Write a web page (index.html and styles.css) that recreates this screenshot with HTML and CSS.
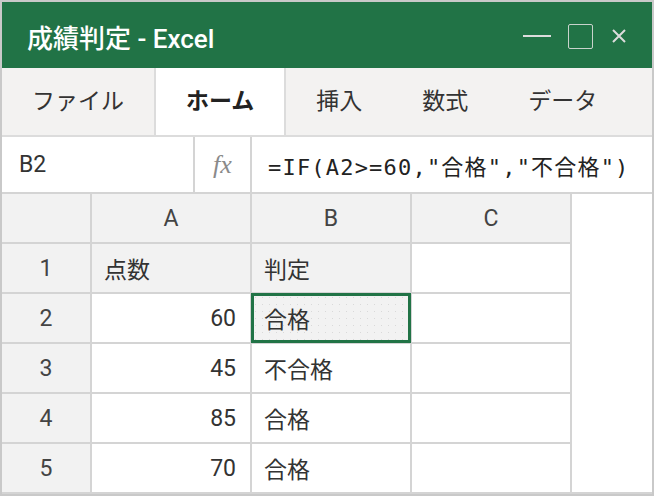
FILE: index.html
```html
<!DOCTYPE html>
<html lang="ja">
<head>
    <meta charset="UTF-8">
    <meta name="viewport" content="width=device-width, initial-scale=1.0">
    <title>成績判定 - Excel</title>
    <link rel="stylesheet" href="styles.css">
</head>
<body>
    <div class="window">
        <div class="titlebar">
            <div class="app-title">成績判定 - Excel</div>
            <div class="controls">
                <span class="ctl-min"></span>
                <span class="ctl-max"></span>
                <svg class="ctl-close" width="14" height="14" viewBox="0 0 14 14">
                    <path d="M1 1 L13 13 M13 1 L1 13" stroke="#dcdcdc" stroke-width="2" fill="none"/>
                </svg>
            </div>
        </div>

        <div class="tabs">
            <div class="tab">ファイル</div>
            <div class="tab active">ホーム</div>
            <div class="tab">挿入</div>
            <div class="tab">数式</div>
            <div class="tab">データ</div>
        </div>

        <div class="formula-bar">
            <div class="name-box">B2</div>
            <div class="fx-box">fx</div>
            <div class="formula">=IF(A2&gt;=60,"合格","不合格")</div>
        </div>

        <div class="sheet-area">
            <div class="sheet">
                <div class="hdr corner"></div>
                <div class="hdr col">A</div>
                <div class="hdr col">B</div>
                <div class="hdr col">C</div>

                <div class="hdr row">1</div>
                <div class="cell label">点数</div>
                <div class="cell label">判定</div>
                <div class="cell"></div>

                <div class="hdr row">2</div>
                <div class="cell num">60</div>
                <div class="cell selected">合格</div>
                <div class="cell"></div>

                <div class="hdr row">3</div>
                <div class="cell num">45</div>
                <div class="cell">不合格</div>
                <div class="cell"></div>

                <div class="hdr row">4</div>
                <div class="cell num">85</div>
                <div class="cell">合格</div>
                <div class="cell"></div>

                <div class="hdr row">5</div>
                <div class="cell num">70</div>
                <div class="cell">合格</div>
                <div class="cell"></div>
            </div>
        </div>
    </div>
</body>
</html>
```

FILE: styles.css
```css
body {
    margin: 0;
    padding: 0;
    font-family: Roboto, "Noto Sans CJK JP", sans-serif;
    background: white;
    color: #333;
}

.window {
    width: 654px;
    height: 496px;
    box-sizing: border-box;
    border: 2px solid #c9c9c9;
    background: white;
    overflow: hidden;
}

.titlebar {
    height: 66px;
    background: #217346;
    display: flex;
    align-items: center;
    justify-content: space-between;
    padding: 2px 26px 0 25px;
    box-sizing: border-box;
}

.app-title {
    color: white;
    font-size: 26px;
    font-weight: 500;
}

.controls {
    display: flex;
    align-items: center;
}

.ctl-min {
    width: 28px;
    height: 2px;
    background: #dcdcdc;
    margin-right: 17px;
}

.ctl-max {
    width: 23px;
    height: 23px;
    border: 1.5px solid #c9d3cc;
    border-radius: 2px;
    margin-right: 19px;
}

.tabs {
    height: 67px;
    background: #f3f2f1;
    border-bottom: 2px solid #dcdcdc;
    display: flex;
}

.tab {
    padding: 0 30px;
    font-size: 23px;
    line-height: 67px;
    color: #333;
}

.tab.active {
    background: white;
    border-left: 2px solid #dcdcdc;
    border-right: 2px solid #dcdcdc;
    font-weight: 700;
    color: #222;
}

.formula-bar {
    height: 55px;
    border-bottom: 2px solid #d4d4d4;
    display: flex;
    align-items: stretch;
}

.name-box {
    width: 193px;
    border-right: 2px solid #d4d4d4;
    padding-left: 17px;
    box-sizing: border-box;
    font-size: 23px;
    display: flex;
    align-items: center;
}

.fx-box {
    width: 57px;
    border-right: 2px solid #d4d4d4;
    box-sizing: border-box;
    font-family: "Liberation Serif", serif;
    font-style: italic;
    font-size: 26px;
    color: #8a8a8a;
    display: flex;
    align-items: center;
    justify-content: center;
}

.formula {
    padding-left: 16px;
    font-family: "DejaVu Sans Mono", "Noto Sans CJK JP", monospace;
    font-size: 22px;
    letter-spacing: 1.2px;
    color: #222;
    display: flex;
    align-items: center;
}

.sheet-area {
    border-bottom: 2px solid #d4d4d4;
}

.sheet {
    display: grid;
    grid-template-columns: 88px 158px 158px 158px;
    grid-auto-rows: 48px;
    gap: 2px;
    width: max-content;
    background: #d4d4d4;
    padding-right: 2px;
}

.hdr {
    background: #f2f2f2;
    font-size: 23px;
    color: #444;
    display: flex;
    align-items: center;
    justify-content: center;
}

.cell {
    background: white;
    font-size: 23px;
    color: #333;
    display: flex;
    align-items: center;
    padding: 0 12px;
}

.cell.label {
    background: #f2f2f2;
}

.cell.num {
    justify-content: flex-end;
    padding-right: 14px;
}

.cell.selected {
    background-color: #f2f2f2;
    background-image: radial-gradient(#d9d9d9 0.7px, transparent 1px);
    background-size: 7px 7px;
    outline: 3px solid #217346;
    outline-offset: -2px;
}
```
